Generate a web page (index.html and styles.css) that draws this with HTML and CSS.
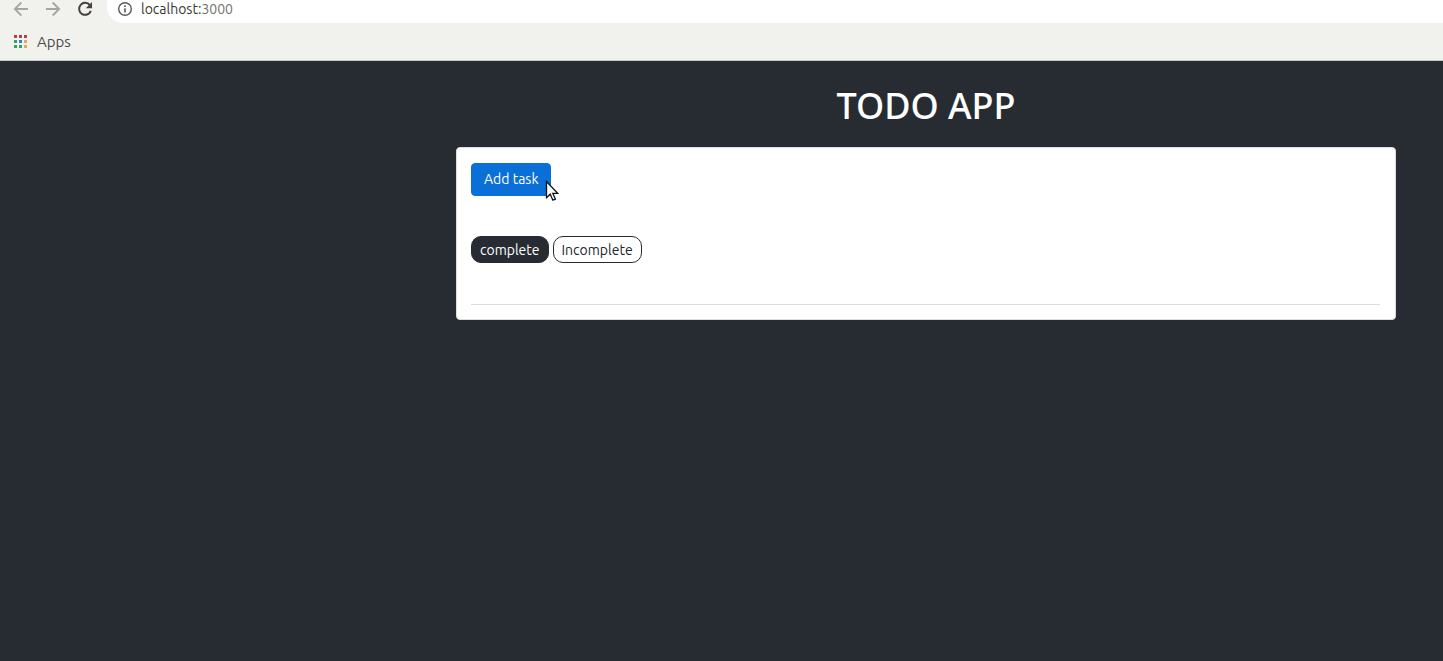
FILE: index.html
```html
<!DOCTYPE html>
<html lang="en">
<head>
<meta charset="utf-8">
<title>Todo App</title>
<link rel="stylesheet" href="styles.css">
</head>
<body>
<header class="browser">
  <div class="toolbar">
    <nav class="nav">
      <button class="nav-btn" type="button" aria-label="Back">
        <svg width="16" height="16" viewBox="0 0 16 16" fill="none" stroke="#a7a5a1" stroke-width="1.8"><path d="M15 8H2M8.300 1.500L1.800 8l6.500 6.500"/></svg>
      </button>
      <button class="nav-btn" type="button" aria-label="Forward">
        <svg width="16" height="16" viewBox="0 0 16 16" fill="none" stroke="#a7a5a1" stroke-width="1.800"><path d="M1 8h13M7.700 1.500L14.200 8l-6.500 6.500"/></svg>
      </button>
      <button class="nav-btn" type="button" aria-label="Reload">
        <svg width="16" height="16" viewBox="0 0 16 16"><path d="M12.900 4.200A6 6 0 1 0 13.800 9.800" fill="none" stroke="#45423f" stroke-width="2"/><path d="M15 1v6.200H8.800z" fill="#45423f"/></svg>
      </button>
    </nav>
    <div class="address">
      <svg width="16" height="16" viewBox="0 0 16 16"><circle cx="8" cy="8" r="6.300" fill="none" stroke="#5c5a57" stroke-width="1.400"/><path d="M7.200 7.200h1.600v4.300H7.200zM7.200 4.300h1.600v1.600H7.200z" fill="#5c5a57"/></svg>
      <span class="url">localhost:<span class="port">3000</span></span>
    </div>
  </div>
  <div class="bookmarks">
    <a class="bookmark" href="#">
      <svg width="14" height="14" viewBox="0 0 14 14"><path d="M0 0h3v3H0zM5 0h3v3H5zM10 0h3v3h-3z" fill="#c23a4b"/><path d="M0 5h3v3H0zM0 10h3v3H0zM5 10h3v3H5z" fill="#36a05c"/><path d="M5 5h3v3H5z" fill="#2f7fd0"/><path d="M10 5h3v3h-3zM10 10h3v3h-3z" fill="#e0ad55"/></svg>
      Apps
    </a>
  </div>
</header>
<main class="app">
  <h1 class="title">TODO APP</h1>
  <section class="card">
    <button class="add" type="button">Add task
      <svg class="cursor" width="14" height="22" viewBox="0 0 14 22"><path d="M1.500 1.500v16.200l3.700-3.500 2.700 6 2.500-1.100-2.600-5.800h4.900z" fill="#fff" stroke="#111" stroke-width="1.300"/></svg>
    </button>
    <div class="filters">
      <button class="filter filter-active" type="button">complete</button>
      <button class="filter" type="button">Incomplete</button>
    </div>
    <hr class="rule">
  </section>
</main>
</body>
</html>
```

FILE: styles.css
```css
* { box-sizing: border-box; }

body {
  margin: 0;
  min-height: 100vh;
  background: #272c33;
  color: #212529;
  font-family: Ubuntu, "Noto Sans", sans-serif;
  font-size: 14px;
}

button { font: inherit; cursor: pointer; }
svg { display: block; flex: none; }

.browser {
  background: #f1f1ed;
  border-bottom: 1px solid #c9c9c5;
}

.toolbar { display: flex; }

.nav {
  display: flex;
  gap: 16px;
  padding: 1px 14px 6px 13px;
}

.nav-btn {
  padding: 0;
  border: 0;
  background: none;
}

.address {
  flex: 1;
  display: flex;
  align-items: center;
  gap: 8px;
  padding: 0 10px 5px;
  background: #fff;
  border-bottom-left-radius: 16px;
  color: #383633;
  line-height: 18px;
}

.port { color: #73716e; }

.bookmarks { padding: 8px 14px; }

.bookmark {
  display: inline-flex;
  align-items: center;
  gap: 9px;
  color: #4c4a47;
  font-size: 15px;
  line-height: 21px;
  text-decoration: none;
}

.app {
  margin-left: 31.6%;
  margin-right: 3.26%;
  padding-top: 24px;
}

.title {
  margin: 0 0 20px;
  color: #fff;
  font-family: "Noto Sans", sans-serif;
  font-size: 36px;
  font-weight: 500;
  line-height: 42px;
  text-align: center;
}

.card {
  padding: 15px 15px 14px 14px;
  background: #fff;
  border: 1px solid #dcdee0;
  border-radius: 4px;
}

.add {
  position: relative;
  display: block;
  padding: 5px 12px;
  border: 1px solid #0a70d8;
  border-radius: 4px;
  background: #0a70d8;
  color: #fff;
  line-height: 21px;
}

.cursor {
  position: absolute;
  right: -9px;
  bottom: -7px;
}

.filters {
  display: flex;
  gap: 4px;
  margin-top: 40px;
}

.filter {
  padding: 3px 8px 2px;
  border: 1px solid #272c33;
  border-radius: 10px;
  background: #fff;
  color: #212529;
  line-height: 20px;
}

.filter-active {
  background: #272c33;
  color: #fff;
}

.rule {
  margin: 41px 0 0;
  border: 0;
  border-top: 1px solid #dcdcdc;
}
```
